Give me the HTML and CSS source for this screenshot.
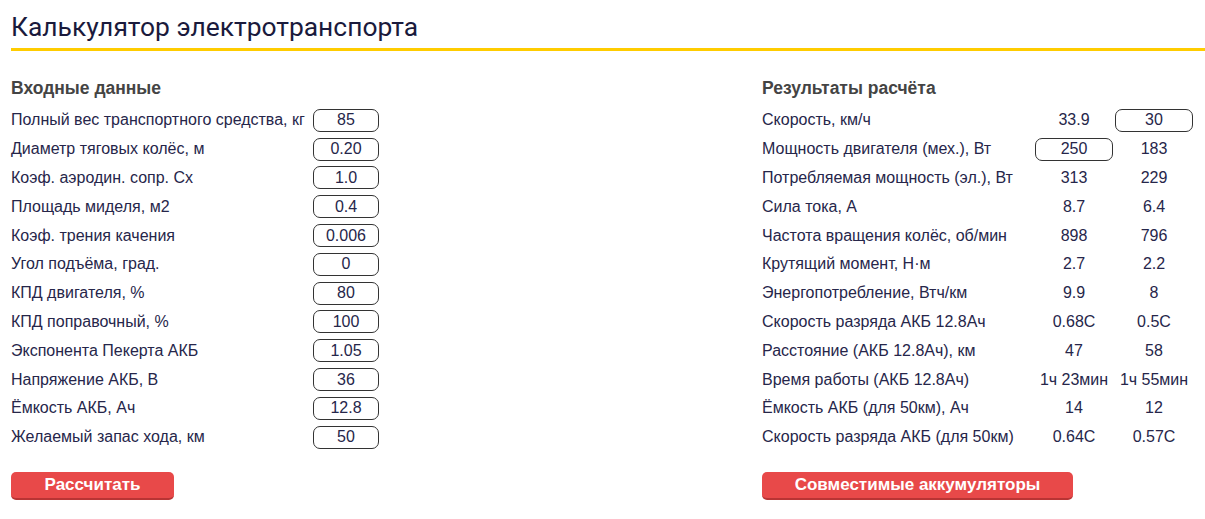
FILE: index.html
```html
<!DOCTYPE html>
<html lang="ru">
<head>
  <meta charset="UTF-8" />
  <title>Калькулятор электротранспорта</title>
  <link rel="stylesheet" href="styles.css">
</head>
<body>

  <h1 class="title">Калькулятор электротранспорта</h1>

  <div class="calc">
    <div class="col col-in">
      <h2>Входные данные</h2>
      <div class="row"><span class="lbl">Полный вес транспортного средства, кг</span><input class="num" value="85"></div>
      <div class="row"><span class="lbl">Диаметр тяговых колёс, м</span><input class="num" value="0.20"></div>
      <div class="row"><span class="lbl">Коэф. аэродин. сопр. Cx</span><input class="num" value="1.0"></div>
      <div class="row"><span class="lbl">Площадь миделя, м2</span><input class="num" value="0.4"></div>
      <div class="row"><span class="lbl">Коэф. трения качения</span><input class="num" value="0.006"></div>
      <div class="row"><span class="lbl">Угол подъёма, град.</span><input class="num" value="0"></div>
      <div class="row"><span class="lbl">КПД двигателя, %</span><input class="num" value="80"></div>
      <div class="row"><span class="lbl">КПД поправочный, %</span><input class="num" value="100"></div>
      <div class="row"><span class="lbl">Экспонента Пекерта АКБ</span><input class="num" value="1.05"></div>
      <div class="row"><span class="lbl">Напряжение АКБ, В</span><input class="num" value="36"></div>
      <div class="row"><span class="lbl">Ёмкость АКБ, Ач</span><input class="num" value="12.8"></div>
      <div class="row"><span class="lbl">Желаемый запас хода, км</span><input class="num" value="50"></div>
      <button class="btn btn-calc">Рассчитать</button>
    </div>

    <div class="col col-out">
      <h2>Результаты расчёта</h2>
      <div class="row"><span class="lbl">Скорость, км/ч</span><span class="val">33.9</span><span class="val"><input class="num wide" value="30"></span></div>
      <div class="row"><span class="lbl">Мощность двигателя (мех.), Вт</span><span class="val"><input class="num wide" value="250"></span><span class="val">183</span></div>
      <div class="row"><span class="lbl">Потребляемая мощность (эл.), Вт</span><span class="val">313</span><span class="val">229</span></div>
      <div class="row"><span class="lbl">Сила тока, А</span><span class="val">8.7</span><span class="val">6.4</span></div>
      <div class="row"><span class="lbl">Частота вращения колёс, об/мин</span><span class="val">898</span><span class="val">796</span></div>
      <div class="row"><span class="lbl">Крутящий момент, Н·м</span><span class="val">2.7</span><span class="val">2.2</span></div>
      <div class="row"><span class="lbl">Энергопотребление, Втч/км</span><span class="val">9.9</span><span class="val">8</span></div>
      <div class="row"><span class="lbl">Скорость разряда АКБ 12.8Ач</span><span class="val">0.68C</span><span class="val">0.5C</span></div>
      <div class="row"><span class="lbl">Расстояние (АКБ 12.8Ач), км</span><span class="val">47</span><span class="val">58</span></div>
      <div class="row"><span class="lbl">Время работы (АКБ 12.8Ач)</span><span class="val">1ч 23мин</span><span class="val">1ч 55мин</span></div>
      <div class="row"><span class="lbl">Ёмкость АКБ (для 50км), Ач</span><span class="val">14</span><span class="val">12</span></div>
      <div class="row"><span class="lbl">Скорость разряда АКБ (для 50км)</span><span class="val">0.64C</span><span class="val">0.57C</span></div>
      <button class="btn btn-acc">Совместимые аккумуляторы</button>
    </div>
  </div>

</body>
</html>
```

FILE: styles.css
```css
* { box-sizing: border-box; margin: 0; padding: 0; }

body {
  font-family: 'Liberation Sans', Arial, sans-serif;
  font-size: 16px;
  color: #26264a;
  background: #fff;
  padding: 0 0 0 11px;
}

.title {
  font-family: Roboto, sans-serif;
  font-weight: 400;
  font-size: 26.4px;
  line-height: 34px;
  color: #1a1a3c;
  padding-top: 10px;
  padding-bottom: 4px;
  border-bottom: 3px solid #ffcc00;
}

.calc {
  display: flex;
  margin-top: 27px;
}

.col-in { width: 751px; }
.col-out { width: 443px; }

h2 {
  font-size: 17.5px;
  font-weight: bold;
  color: #444;
  line-height: 20px;
  margin-bottom: 8px;
}

.row {
  display: flex;
  align-items: center;
  height: 28.8px;
}

.col-in .lbl { width: 302px; }
.col-out .lbl { width: 272px; }

.val {
  width: 80px;
  text-align: center;
}

.num {
  width: 66px;
  height: 23px;
  border: 1px solid #333;
  border-radius: 7px;
  font-family: 'Liberation Sans', Arial, sans-serif;
  font-size: 16px;
  color: #26264a;
  text-align: center;
  background: #fff;
  outline: none;
}

.num.wide { width: 78px; vertical-align: middle; }

.btn {
  display: block;
  margin-top: 20px;
  height: 28px;
  background: #e84949;
  border: none;
  border-bottom: 2px solid #b83434;
  border-radius: 5px;
  color: #fff;
  font-family: 'Liberation Sans', Arial, sans-serif;
  font-size: 17px;
  font-weight: bold;
  cursor: pointer;
}

.btn-calc { width: 163px; }
.btn-acc { width: 311px; }
```
